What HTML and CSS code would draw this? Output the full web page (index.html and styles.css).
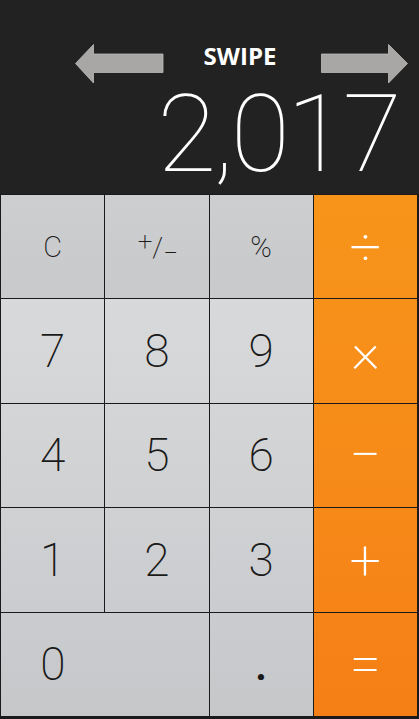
FILE: index.html
```html
<!DOCTYPE html>
<html>
<head>
<meta charset="utf-8">
<link rel="stylesheet" href="styles.css">
</head>
<body>
<div class="app">
  <header class="display">
    <div class="hint">
      <svg class="arrow" width="89" height="40" viewBox="0 0 89 40"><polygon points="0.5,19.5 18.5,0.5 18.5,10 88,10 88,28.5 18.5,28.5 18.5,39" fill="#a9a7a6" stroke="#bdbbba" stroke-width="0.8"/></svg>
      <span class="swipe">SWIPE</span>
      <svg class="arrow" width="88" height="40" viewBox="0 0 88 40"><polygon points="0.5,10 67.5,10 67.5,0.5 86.5,19.5 67.5,39 67.5,28.5 0.5,28.5" fill="#a9a7a6" stroke="#bdbbba" stroke-width="0.8"/></svg>
    </div>
    <div class="result">2,017</div>
  </header>
  <main class="keypad">
    <div class="key fn"><span class="small">C</span></div>
    <div class="key fn"><span class="pm"><span class="pm-plus">+</span><span class="pm-slash">/</span><span class="pm-minus">−</span></span></div>
    <div class="key fn"><span class="small">%</span></div>
    <div class="key op r1">÷</div>

    <div class="key num r2">7</div>
    <div class="key num r2">8</div>
    <div class="key num r2">9</div>
    <div class="key op r2">×</div>

    <div class="key num r3">4</div>
    <div class="key num r3">5</div>
    <div class="key num r3">6</div>
    <div class="key op r3">−</div>

    <div class="key num r4">1</div>
    <div class="key num r4">2</div>
    <div class="key num r4">3</div>
    <div class="key op r4">+</div>

    <div class="key num r5 zero"><span>0</span></div>
    <div class="key num r5"><span class="dot">.</span></div>
    <div class="key op r5">=</div>
  </main>
</div>
</body>
</html>
```
FILE: styles.css
```css
html, body {
  margin: 0;
  padding: 0;
  background: #1c1c1c;
}
.app {
  width: 419px;
  height: 719px;
  display: flex;
  flex-direction: column;
  overflow: hidden;
}
.display {
  height: 194px;
  background: #222222;
  display: flex;
  flex-direction: column;
}
.hint {
  display: flex;
  align-items: center;
  padding-top: 44px;
  padding-left: 75px;
  height: 40px;
}
.arrow {
  display: block;
  flex: none;
}
.swipe {
  flex: none;
  width: 157px;
  text-align: center;
  color: #ffffff;
  font-family: "Open Sans", "Liberation Sans", sans-serif;
  font-weight: 700;
  font-size: 24px;
  line-height: 24px;
  margin-top: -17px;
  text-indent: -5px;
}
.result {
  text-align: right;
  padding-right: 20px;
  color: #ffffff;
  font-family: "Roboto", "Liberation Sans", sans-serif;
  font-weight: 100;
  font-size: 108px;
  line-height: 100px;
  letter-spacing: -3px;
}
.keypad {
  flex: 1;
  display: grid;
  grid-template-columns: repeat(4, 1fr);
  grid-template-rows: repeat(5, 1fr);
  gap: 1px;
  padding: 1px 2px 3px 1px;
  background: #1a1a1a;
}
.key {
  display: flex;
  align-items: center;
  justify-content: center;
  font-family: "Roboto", "Liberation Sans", sans-serif;
  font-weight: 300;
  color: #1a1a1a;
}
.fn {
  background: linear-gradient(#cdcecf, #c8c9cb);
}
.small {
  font-size: 29px;
  font-weight: 200;
}
.pm {
  display: inline-flex;
  align-items: center;
  font-size: 26px;
  font-weight: 200;
  height: 34px;
  padding-left: 2px;
}
.pm-plus {
  position: relative;
  top: -6px;
}
.pm-slash {
  font-size: 28px;
  position: relative;
  top: 1px;
}
.pm-minus {
  position: relative;
  top: 6px;
}
.num {
  font-size: 46px;
  font-weight: 200;
}
.dot {
  font-weight: 500;
}
.r2.num { background: linear-gradient(#d8d9db, #d4d5d7); }
.r3.num { background: linear-gradient(#d4d5d7, #d0d1d3); }
.r4.num { background: linear-gradient(#d0d1d3, #cbcccf); }
.r5.num { background: linear-gradient(#cbcccf, #c6c7c9); }
.zero {
  grid-column: span 2;
  justify-content: flex-start;
}
.zero span {
  width: 50%;
  text-align: center;
}
.op {
  color: #ffffff;
  font-size: 56px;
  font-weight: 200;
}
.r1.op { background: linear-gradient(#f8941a, #f7911a); }
.r2.op { background: linear-gradient(#f7911a, #f78d19); }
.r3.op { background: linear-gradient(#f78d19, #f68918); }
.r4.op { background: linear-gradient(#f68918, #f68417); }
.r5.op { background: linear-gradient(#f68417, #f57f16); }
```
